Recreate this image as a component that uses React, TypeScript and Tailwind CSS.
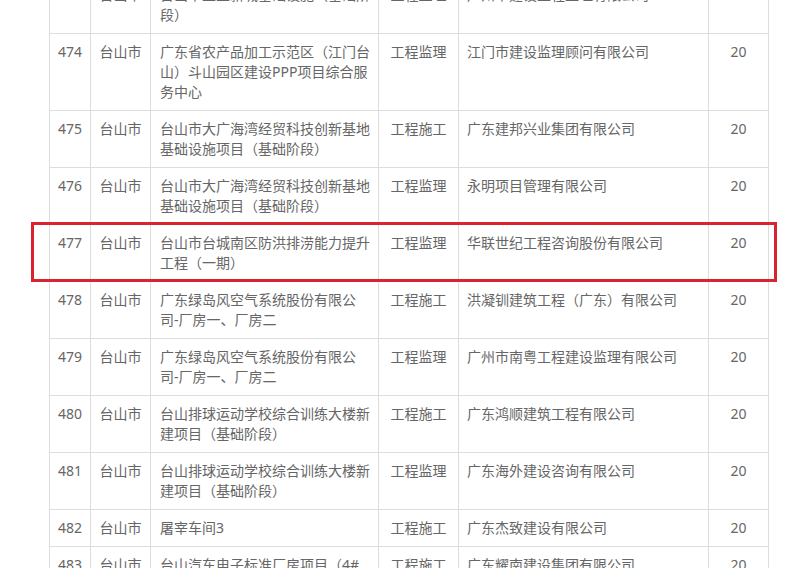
const rows = [
  ["473", "台山市", "台山市工业新城基础设施（基础阶段）", "工程监理", "广州市建设工程监理有限公司", "20"],
  ["474", "台山市", "广东省农产品加工示范区（江门台山）斗山园区建设PPP项目综合服务中心", "工程监理", "江门市建设监理顾问有限公司", "20"],
  ["475", "台山市", "台山市大广海湾经贸科技创新基地基础设施项目（基础阶段）", "工程施工", "广东建邦兴业集团有限公司", "20"],
  ["476", "台山市", "台山市大广海湾经贸科技创新基地基础设施项目（基础阶段）", "工程监理", "永明项目管理有限公司", "20"],
  ["477", "台山市", "台山市台城南区防洪排涝能力提升工程（一期）", "工程监理", "华联世纪工程咨询股份有限公司", "20"],
  ["478", "台山市", "广东绿岛风空气系统股份有限公司-厂房一、厂房二", "工程施工", "洪凝钏建筑工程（广东）有限公司", "20"],
  ["479", "台山市", "广东绿岛风空气系统股份有限公司-厂房一、厂房二", "工程监理", "广州市南粤工程建设监理有限公司", "20"],
  ["480", "台山市", "台山排球运动学校综合训练大楼新建项目（基础阶段）", "工程施工", "广东鸿顺建筑工程有限公司", "20"],
  ["481", "台山市", "台山排球运动学校综合训练大楼新建项目（基础阶段）", "工程监理", "广东海外建设咨询有限公司", "20"],
  ["482", "台山市", "屠宰车间3", "工程施工", "广东杰致建设有限公司", "20"],
  ["483", "台山市", "台山汽车电子标准厂房项目（4#厂房）", "工程施工", "广东耀南建设集团有限公司", "20"],
];

export default function App() {
  return (
    <div
      className="relative h-[568px] w-[802px] overflow-hidden bg-white text-[14px] leading-5 text-[#666]"
      style={{ fontFamily: '"Noto Sans", "Noto Sans CJK SC", sans-serif' }}
    >
      <div className="-mt-[24px] ml-[49px] grid w-[720px] grid-cols-[41px_60px_228px_80px_250px_60px] border-l border-[#ddd]">
        {rows.map((r) => (
          <div key={r[0]} className="contents">
            <div className="border-r border-t border-[#ddd] py-2 text-center">{r[0]}</div>
            <div className="border-r border-t border-[#ddd] py-2 text-center">{r[1]}</div>
            <div className="border-r border-t border-[#ddd] py-2 pl-[9px] pr-[6px]">{r[2]}</div>
            <div className="border-r border-t border-[#ddd] py-2 text-center">{r[3]}</div>
            <div className="border-r border-t border-[#ddd] py-2 pl-[8px] pr-[6px]">{r[4]}</div>
            <div className="border-r border-t border-[#ddd] py-2 text-center">{r[5]}</div>
          </div>
        ))}
      </div>
      {/* highlight */}
      <div className="absolute left-[31px] top-[222px] h-[60px] w-[746px] border-[3px] border-[#d9232e]" />
    </div>
  );
}
